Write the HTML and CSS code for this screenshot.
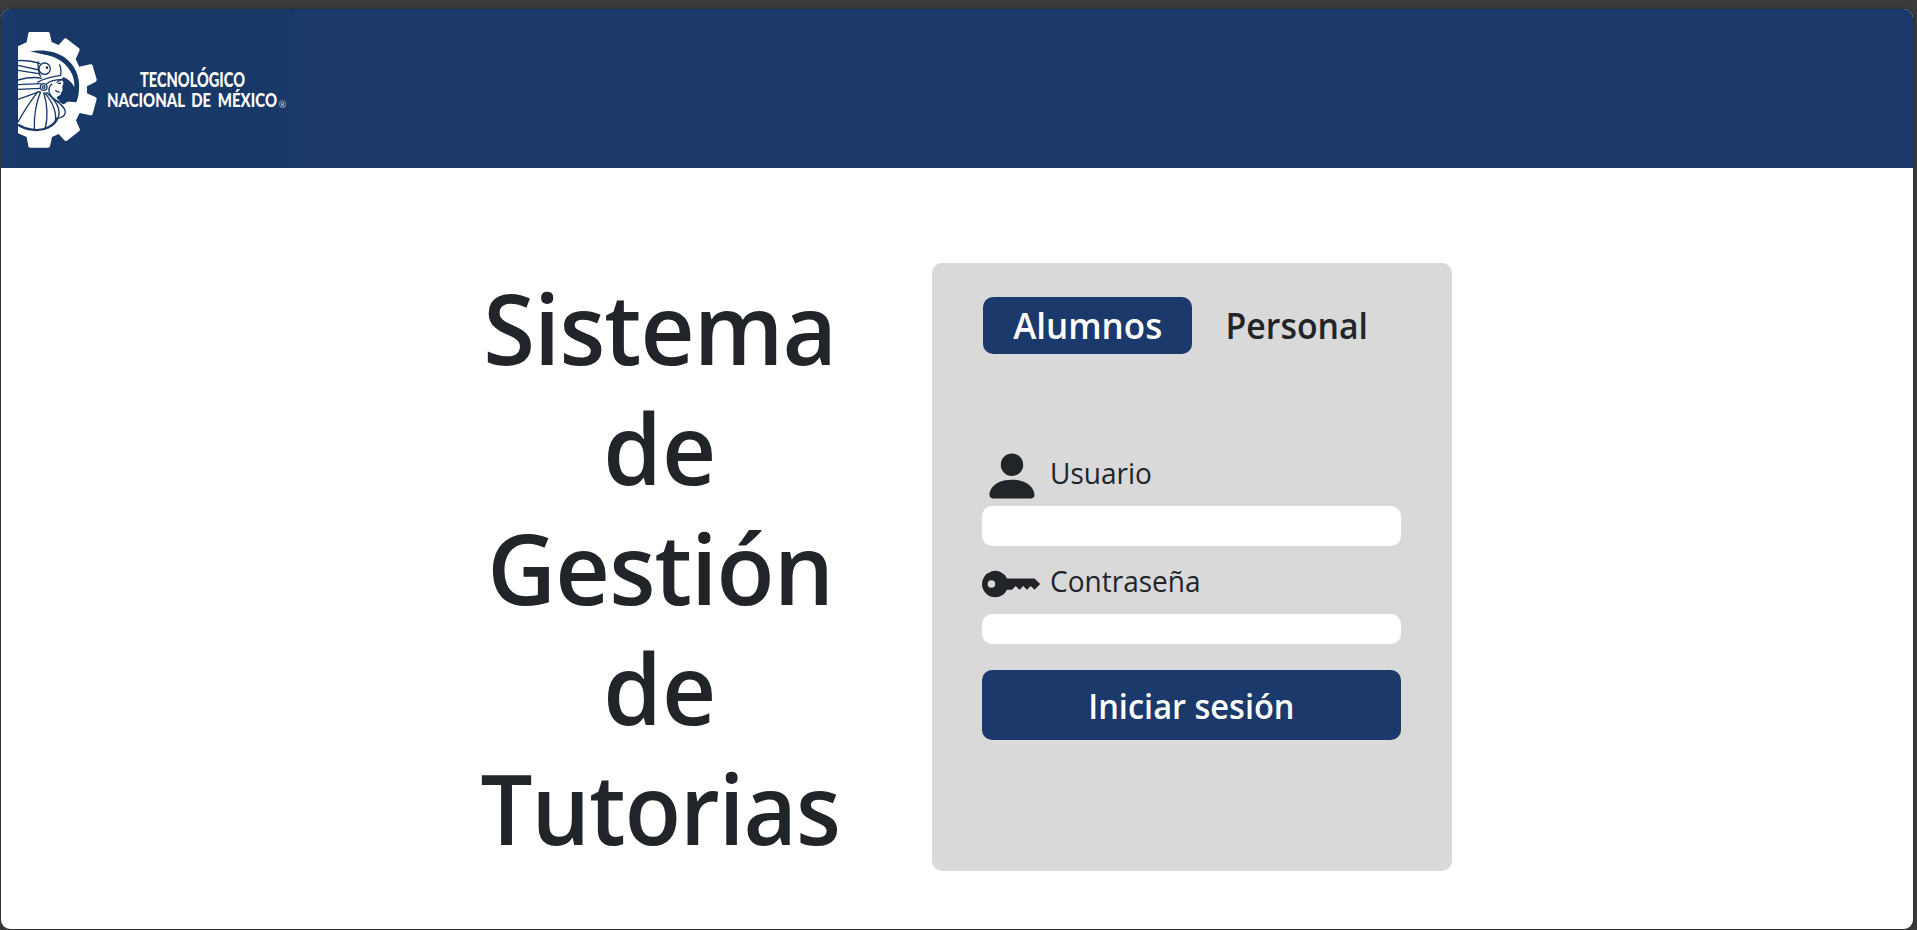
FILE: index.html
```html
<!DOCTYPE html>
<html lang="es">
<head>
<meta charset="utf-8">
<title>Sistema de Gestión de Tutorias</title>
<link rel="stylesheet" href="styles.css">
</head>
<body>
<div class="window">
  <header class="header">
    <svg class="logo" viewBox="1 9 310 159" width="310" height="159" role="img" aria-label="Tecnológico Nacional de México">
      <rect class="logo-bg" x="13" y="9" width="281" height="159"/>
      <g transform="translate(10 25) scale(.33333)">
        <path class="w" d="M24 64 50 52 55 25Q56 21 60 21H114Q118 21 119 25L125 51 146 60 162 42Q165 38 170 41L207 70Q211 73 208 78L197 103 208 125 241 118Q247 117 248 122L260 163Q261 168 256 171L231 184V205L256 216Q261 218 260 223L248 266Q247 272 241 271L209 264 198 286 209 311Q211 316 207 319L171 347Q167 350 163 346L146 327 126 336 120 364Q119 368 114 368H60Q56 368 55 364L50 336 24 325Z"/>
        <path class="n" d="M60 80C90 72 133 76 162 96C195 118 211 155 207 195C206 211 203 222 199 232C188 230 178 229 171 231C167 235 164 236 159 238C148 231 137 225 132 217L128 189 145 165 159 160 152 130 145 114C126 94 96 84 60 80Z"/>
        <path class="w" d="M24 100C50 88 91 86 118 92C163 103 197 144 193 186C185 171 173 158 153 155C121 154 101 159 81 171L24 176Z"/>
        <path class="w" d="M143 173Q148 166 158 167Q163 176 157 183Q157 191 158 197L153 203Q154 210 147 212Q138 214 142 222L155 231Q132 238 126 218Q109 200 119 180Z"/>
        <path class="w" d="M105 200C132 220 164 240 166 260Q162 276 145 279C134 302 111 318 82 319C60 319 39 315 24 308V199Z"/>
        <g class="l">
          <path d="M24 107C47 105 68 109 91 116M24 121 87 135M24 136 86 146M84 109C85 123 82 137 92 155M148 118Q155 131 152 151C122 155 103 160 82 172M24 165C53 157 78 156 96 160M24 179 92 176M24 193 92 190M110 176Q124 164 156 163M126 176Q109 192 122 211Q135 235 169 229"/>
          <path d="M91 199 24 223M84 199Q47 248 24 291M92 200Q71 248 73 316M101 202Q119 260 105 314M104 203Q145 253 135 293M109 202C132 225 166 242 166 261Q165 277 142 280M112 205Q158 245 144 280"/>
          <path class="thick" d="M24 299Q45 312 66 314C104 320 135 301 143 278"/>
          <circle cx="104" cy="131" r="17"/><circle cx="101" cy="186" r="10"/><circle cx="101" cy="186" r="4"/>
          <path d="M144 176 153 174M136 196Q143 202 149 201"/>
        </g>
        <circle class="n" cx="111" cy="128" r="4"/>
      </g>
      <text class="brand" x="140" y="86.5" textLength="105" lengthAdjust="spacingAndGlyphs">TECNOLÓGICO</text>
      <text class="brand wide" x="107" y="107" textLength="170" lengthAdjust="spacingAndGlyphs">NACIONAL DE MÉXICO</text>
      <text class="reg" x="278.5" y="107.5">®</text>
    </svg>
  </header>
  <main class="main">
    <h1 class="title">
      <span class="line sistema">Sistema</span>
      <span class="line de">de</span>
      <span class="line gestion">Gestión</span>
      <span class="line de">de</span>
      <span class="line tutorias">Tutorias</span>
    </h1>
    <section class="card">
      <nav class="tabs">
        <a class="tab active"><span class="tab-text">Alumnos</span></a>
        <a class="tab"><span class="tab-text personal">Personal</span></a>
      </nav>
      <form class="form">
        <label class="field" for="user">
          <svg class="icon" viewBox="0 0 16 16"><path d="M3 14s-1 0-1-1 1-4 6-4 6 3 6 4-1 1-1 1H3zm5-6a3 3 0 1 0 0-6 3 3 0 0 0 0 6z"/></svg>
          <span class="label-text">Usuario</span>
        </label>
        <input id="user" class="input" type="text">
        <label class="field second" for="pass">
          <svg class="icon" viewBox="0 0 16 16"><path d="M3.5 11.5a3.5 3.5 0 1 1 3.163-5H14L15.5 8 14 9.5l-1-1-1 1-1-1-1 1-1-1-1 1H6.663a3.5 3.5 0 0 1-3.163 2zM2.5 9a1 1 0 1 0 0-2 1 1 0 0 0 0 2z"/></svg>
          <span class="label-text">Contraseña</span>
        </label>
        <input id="pass" class="input short" type="password">
        <button class="submit" type="button"><span class="submit-text">Iniciar sesión</span></button>
      </form>
    </section>
  </main>
</div>
</body>
</html>
```
FILE: styles.css
```css
* { box-sizing: border-box; }
body {
  margin: 0;
  height: 930px;
  padding: 9px 4px 1px 1px;
  background: #3b3b3b;
  color: #212529;
  font-family: "Open Sans", "Noto Sans", sans-serif;
  overflow: hidden;
}
.window {
  height: 920px;
  background: #fff;
  border-radius: 9px;
  overflow: hidden;
  box-shadow: 0 0 3px #222;
}
.header { height: 159px; background: #1b396a; }
.logo { display: block; }
.logo-bg { fill: #183867; }
.w { fill: #fff; }
.n { fill: #183867; }
.l { fill: none; stroke: #183867; stroke-width: 4; }
.thick { stroke-width: 7; }
.brand { fill: #fff; font: 900 20px Lato, sans-serif; }
.wide { font-size: 19px; word-spacing: 4px; }
.reg { fill: #c5cedb; font: 9.5px Lato, sans-serif; }
.main {
  display: grid;
  grid-template-columns: 400px 520px;
  column-gap: 72px;
  padding: 95px 0 0 459px;
}
.title {
  margin: 0;
  padding-top: 4px;
  display: flex;
  flex-direction: column;
  align-items: center;
  font-weight: 600;
  font-size: 98px;
  line-height: 120px;
}
.line { letter-spacing: -1px; }
.sistema { transform: scaleX(.96); }
.de { letter-spacing: 0; transform: scaleX(.962); }
.gestion { transform: scaleX(.97); }
.tutorias { transform: scaleX(.94); }
.card {
  height: 608px;
  padding: 34px 51px 0 50px;
  border-radius: 10px;
  background: #d9d9d9;
}
.tabs { display: flex; margin-left: 1px; }
.tab {
  width: 209px;
  height: 57px;
  display: flex;
  align-items: center;
  justify-content: center;
  border-radius: 10px;
  font-weight: 600;
  font-size: 35.5px;
  line-height: 57px;
}
.tab.active { background: #1b396a; color: #fff; }
.tab-text { transform: scaleX(.985); }
.personal { transform: scaleX(.952); }
.form { display: flex; flex-direction: column; margin-top: 92px; }
.field { display: flex; height: 60px; gap: 8px; font-size: 30px; line-height: 54px; }
.label-text { transform: scaleX(.934); transform-origin: left; }
.icon { width: 60px; height: 60px; fill: #212529; }
.second { margin-top: 8px; }
.input {
  width: 419px;
  height: 40px;
  border: 0;
  border-radius: 10px;
  background: #fff;
}
.input.short { height: 30px; }
.submit {
  width: 419px;
  height: 70px;
  margin-top: 26px;
  padding: 2px 0 0;
  border: 0;
  border-radius: 10px;
  background: #1b396a;
  color: #fff;
  font: 600 34.5px/68px "Open Sans", sans-serif;
}
.submit-text { display: inline-block; transform: scaleX(.943); }
```
